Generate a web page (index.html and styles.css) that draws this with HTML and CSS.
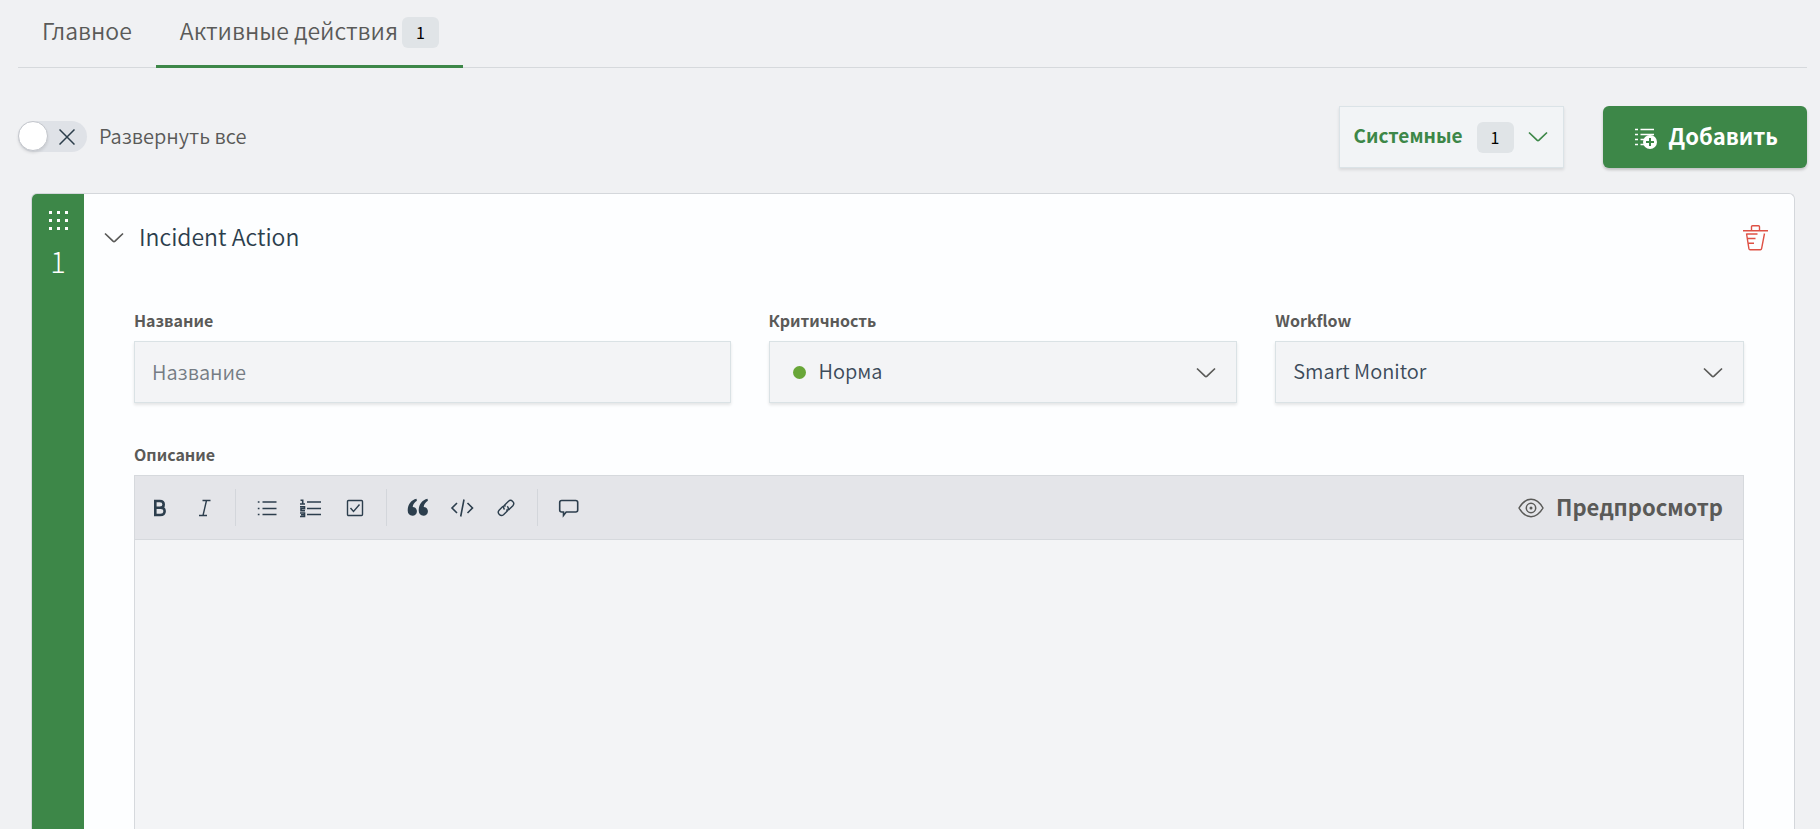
FILE: index.html
```html
<!DOCTYPE html>
<html lang="ru">
<head>
<meta charset="utf-8">
<meta name="viewport" content="width=device-width, initial-scale=1">
<title>Активные действия</title>
<link rel="stylesheet" href="styles.css">
</head>
<body>
<nav class="tabs" role="tablist">
  <button class="tab" type="button" role="tab" aria-selected="false"><span class="text">Главное</span></button>
  <button class="tab tab-active" type="button" role="tab" aria-selected="true"><span class="text">Активные действия</span> <span class="badge">1</span></button>
</nav>

<div class="controls">
  <label class="switch">
    <span class="switch-track">
      <input class="switch-input" type="checkbox">
      <svg class="switch-cross" width="16" height="16" viewBox="0 0 16 16" aria-hidden="true"><path d="M.5.5l15 15M15.5.5l-15 15"/></svg>
    </span>
    Развернуть все
  </label>
  <div class="controls-right">
    <button class="system-button" type="button">
      <span class="text">Системные</span> <span class="badge">1</span>
      <svg class="chevron" width="20" height="12" viewBox="0 0 20 12" aria-hidden="true"><path d="M1 1.5l8 7.6q1 .9 2 0l8-7.6"/></svg>
    </button>
    <button class="add-button" type="button">
      <svg width="22" height="24" viewBox="0 0 22 24" aria-hidden="true">
        <path class="add-lines" d="M0 4.500h3M5.500 4.500H19M0 9.500h3M5.500 9.500H19M0 14.500h3M5.500 14.500h4M0 19.500h3M5.500 19.500h4"/>
        <circle class="add-disc" cx="15" cy="17" r="7"/>
        <path class="add-plus" d="M15 13v8M11 17h8"/>
      </svg>
      <span class="text">Добавить</span>
    </button>
  </div>
</div>

<main class="card">
  <div class="card-rail">
    <svg width="19" height="19" viewBox="0 0 19 19" aria-hidden="true"><path d="M0 0h3v3H0zM8 0h3v3H8zM16 0h3v3h-3zM0 8h3v3H0zM8 8h3v3H8zM16 8h3v3h-3zM0 16h3v3H0zM8 16h3v3H8zM16 16h3v3h-3z"/></svg>
    <span>1</span>
  </div>
  <section class="card-body">
    <header class="card-header">
      <button class="card-toggle" type="button">
        <svg class="chevron" width="20" height="12" viewBox="0 0 20 12" aria-hidden="true"><path d="M1 1.5l8 7.600q1 .9 2 0l8-7.600"/></svg>
        <span class="text">Incident Action</span>
      </button>
      <button class="delete-button" type="button" aria-label="Удалить">
        <svg width="25" height="26" viewBox="0 0 25 26" aria-hidden="true"><path d="M0 5.800h25M8.500 5.500V1.800q0-1 1-1h6q1 0 1 1v3.700M3.500 8.500l2.400 15.200q.2 1 1.200 1h10.300q1 0 1.200-1L21.500 8.500M3.500 9h11M4.500 13.500h8M5 18.300h6"/></svg>
      </button>
    </header>
    <form class="form">
      <div class="fields">
        <div class="field">
          <label class="field-label" for="name">Название</label>
          <input class="control" id="name" type="text" placeholder="Название">
        </div>
        <div class="field">
          <label class="field-label" for="severity">Критичность</label>
          <div class="select-box">
            <span class="dot"></span>
            <select class="control control-dotted" id="severity"><option>Норма</option></select>
            <svg class="chevron select-chevron" width="20" height="12" viewBox="0 0 20 12" aria-hidden="true"><path d="M1 1.500l8 7.600q1 .9 2 0l8-7.600"/></svg>
          </div>
        </div>
        <div class="field">
          <label class="field-label" for="workflow">Workflow</label>
          <div class="select-box">
            <select class="control" id="workflow"><option>Smart Monitor</option></select>
            <svg class="chevron select-chevron" width="20" height="12" viewBox="0 0 20 12" aria-hidden="true"><path d="M1 1.500l8 7.600q1 .9 2 0l8-7.600"/></svg>
          </div>
        </div>
      </div>
      <label class="field-label" for="description">Описание</label>
      <div class="editor">
        <div class="toolbar">
          <button class="tool" type="button" aria-label="Полужирный">
            <svg width="24" height="24" viewBox="0 0 24 24" aria-hidden="true"><path class="thick" d="M7.300 5v14h4.900q4.400 0 4.400-3.800T12.200 11.700H7.300h4.500q3.900 0 3.900-3.300T11.800 5z"/></svg>
          </button>
          <button class="tool" type="button" aria-label="Курсив">
            <svg width="24" height="24" viewBox="0 0 24 24" aria-hidden="true"><path d="M10.500 4.500h8M7 19.500h8M14.500 4.500l-3.500 15"/></svg>
          </button>
          <span class="divider"></span>
          <button class="tool" type="button" aria-label="Маркированный список">
            <svg width="24" height="24" viewBox="0 0 24 24" aria-hidden="true"><path d="M7.500 6h14M7.500 12.500h14M7.500 18.500h14M2.800 6h1.700M2.800 12.500h1.700M2.800 18.500h1.700"/></svg>
          </button>
          <button class="tool" type="button" aria-label="Нумерованный список">
            <svg width="24" height="24" viewBox="0 0 24 24" aria-hidden="true"><path d="M8 6h14M8 12.500h14M8 18.500h14"/><path class="digits" d="M1.500 4.300h2.200v3.400M1 8h5M1 10.800h4.500v1.800H2v2.200h4M1 17h4.500v3.500H1M2 18.800h3.500"/></svg>
          </button>
          <button class="tool" type="button" aria-label="Список задач">
            <svg width="24" height="24" viewBox="0 0 24 24" aria-hidden="true"><rect x="4.500" y="4.500" width="15" height="15" rx="1"/><path d="M7.500 12l3 3.500 6-7"/></svg>
          </button>
          <span class="divider"></span>
          <button class="tool" type="button" aria-label="Цитата">
            <svg width="24" height="24" viewBox="0 0 24 24" aria-hidden="true"><path class="solid" d="M10.500 2.700C5 4 1.700 8.500 1.700 14.500c0 3.300 1.900 5.200 4.700 5.200 2.600 0 4.500-1.900 4.500-4.300 0-2.500-1.800-4.300-4.200-4.300.3-2.700 1.800-5 4.200-6.300zM21.500 2.700c-5.500 1.300-8.800 5.800-8.800 11.800 0 3.300 1.900 5.200 4.700 5.200 2.600 0 4.500-1.900 4.500-4.300 0-2.500-1.800-4.300-4.200-4.300.3-2.700 1.800-5 4.200-6.300z"/></svg>
          </button>
          <button class="tool" type="button" aria-label="Код">
            <svg width="24" height="24" viewBox="0 0 24 24" aria-hidden="true"><path class="medium" d="M7 7L2 12l5 5M17.500 7l5 5-5 5M14 3.500l-3.300 17"/></svg>
          </button>
          <button class="tool" type="button" aria-label="Ссылка">
            <svg width="24" height="24" viewBox="0 0 24 24" aria-hidden="true"><path d="M10.500 13.500q-2-2.300.2-4.600l3.800-3.700q2.100-1.800 4.200.2t.2 4.300l-3.400 3.400q-1.500 1.300-3.300.7M13.300 10.200q2.200 2.500 0 4.800l-3.800 3.700q-2.100 1.800-4.200-.2t-.2-4.300l3.400-3.400q1.500-1.300 3.300-.7"/></svg>
          </button>
          <span class="divider"></span>
          <button class="tool" type="button" aria-label="Комментарий">
            <svg width="24" height="24" viewBox="0 0 24 24" aria-hidden="true"><path class="medium" d="M4.700 4.500h14q2 0 2 2V14q0 2-2 2H9.200l-2.700 3.500V16H4.700q-2 0-2-2V6.500q0-2 2-2z"/></svg>
          </button>
          <button class="preview" type="button">
            <svg width="26" height="20" viewBox="0 0 26 20" aria-hidden="true"><path d="M1 10Q6 1.300 13 1.300T25 10Q20 18.700 13 18.700T1 10z"/><circle cx="13" cy="10" r="4.700"/><circle class="pupil" cx="13" cy="10" r="1.500"/></svg>
            <span class="text">Предпросмотр</span>
          </button>
        </div>
        <textarea class="editor-text" id="description"></textarea>
      </div>
    </form>
  </section>
</main>
</body>
</html>
```
FILE: styles.css
```css
*, *::before { box-sizing: border-box; }

body {
  margin: 0;
  height: 100vh;
  padding: 0 13px 0 18px;
  display: flex;
  flex-direction: column;
  overflow: hidden;
  background: #f0f1f3;
  color: #5a5a58;
  font-family: "Noto Sans CJK SC", "Noto Sans", sans-serif;
  font-size: 20px;
  font-weight: 350;
  line-height: 28px;
}

button, input, select, textarea { font: inherit; color: inherit; }
button { margin: 0; border: 0; background: none; cursor: pointer; }
svg { display: block; flex: none; fill: none; stroke: currentColor; }
.text { padding-bottom: 4px; }

.tabs {
  display: flex;
  flex: none;
  height: 68px;
  box-shadow: inset 0 -1px #d6d9dc;
}
.tab {
  display: flex;
  align-items: center;
  gap: 4px;
  padding: 0 24px 1px;
  border-bottom: 3px solid transparent;
  font-size: 23px;
}
.tab-active { border-color: #3d8748; }
.badge {
  width: 37px;
  height: 31px;
  border-radius: 6px;
  background: #e0e4e7;
  color: #000;
  font-size: 16px;
  font-weight: 400;
  line-height: 31px;
  text-align: center;
}

.controls {
  display: flex;
  flex: none;
  align-items: center;
  justify-content: space-between;
  margin-top: 38px;
}
.switch { display: flex; align-items: center; gap: 12px; padding-bottom: 2px; }
.switch-track { position: relative; }
.switch-input {
  display: block;
  appearance: none;
  width: 69px;
  height: 31px;
  margin: 0;
  border-radius: 16px;
  background: #dfe2e7;
}
.switch-input::before {
  content: "";
  display: block;
  width: 30px;
  height: 30px;
  border: 1px solid #c3c6cc;
  border-radius: 50%;
  background: #fff;
  box-shadow: 0 2px 3px #0000001a;
}
.switch-cross {
  position: absolute;
  top: 8px;
  right: 12px;
  color: #2c3e4b;
  stroke-width: 1.5;
  pointer-events: none;
}
.controls-right { display: flex; gap: 39px; }
.system-button {
  display: flex;
  align-items: center;
  gap: 14px;
  padding: 0 15px 0 14px;
  border: 1px solid #dbe3e7;
  background: #f2f4f6;
  box-shadow: 0 2px 3px #0000001a;
  color: #3d8748;
  font-size: 19px;
  font-weight: 700;
}
.add-button {
  display: flex;
  align-items: center;
  gap: 12px;
  height: 62px;
  padding: 0 29px 0 32px;
  border-radius: 6px;
  background: #3d8748;
  box-shadow: 0 2px 3px #00000033;
  color: #fff;
  font-size: 22px;
  font-weight: 700;
}
.add-lines { stroke-width: 1.7; }
.add-disc { fill: #fff; stroke: none; }
.add-plus { stroke: #3d8748; stroke-width: 2; }
.chevron { stroke-width: 1.7; }

.card {
  display: flex;
  flex: 1;
  min-height: 0;
  margin: 25px 12px 0 13px;
  border: 1px solid #d4d7db;
  border-bottom: 0;
  border-radius: 6px 6px 0 0;
  background: #fdfeff;
  overflow: hidden;
}
.card-rail {
  display: flex;
  flex: none;
  flex-direction: column;
  align-items: center;
  gap: 12px;
  width: 52px;
  padding-top: 17px;
  background: #3d8748;
  color: #fff;
  font-size: 29px;
  font-weight: 300;
  line-height: 36px;
}
.card-rail svg { fill: #fff; stroke: none; }
.card-body { display: flex; flex: 1; flex-direction: column; min-width: 0; }
.card-header {
  display: flex;
  align-items: center;
  justify-content: space-between;
  padding: 27px 26px 0 20px;
}
.card-toggle {
  display: flex;
  align-items: center;
  gap: 15px;
  padding: 0;
  color: #2c3e4d;
  font-size: 23px;
  line-height: 30px;
}
.card-toggle svg { color: #5a5a58; }
.delete-button { padding: 0; color: #de5145; }
.delete-button svg { stroke-width: 1.4; }

.form {
  display: flex;
  flex: 1;
  flex-direction: column;
  min-height: 0;
  padding: 52px 50px 0 50px;
}
.fields {
  display: grid;
  grid-template-columns: 14fr 11fr 11fr;
  gap: 38px;
  margin-bottom: 38px;
}
.field { min-width: 0; }
.field-label {
  display: block;
  margin-bottom: 8px;
  font-size: 16px;
  font-weight: 700;
  line-height: 26px;
}
.control {
  display: block;
  appearance: none;
  width: 100%;
  height: 62px;
  padding: 0 17px 2px;
  border: 1px solid #dae2e5;
  border-radius: 0;
  background: #f3f4f6;
  box-shadow: 0 2px 3px #0000001a;
  color: #3c4b5a;
}
.control::placeholder { color: #757c84; opacity: 1; }
.control-dotted { padding-left: 49px; }
.select-box { position: relative; }
.dot {
  position: absolute;
  top: 25px;
  left: 24px;
  width: 13px;
  height: 13px;
  border-radius: 50%;
  background: #68a638;
}
.select-chevron {
  position: absolute;
  top: 26px;
  right: 21px;
  pointer-events: none;
}

.editor {
  display: flex;
  flex: 1;
  flex-direction: column;
  border: 1px solid #d6d9dd;
  border-bottom: 0;
  background: #f3f4f6;
}
.toolbar {
  display: flex;
  flex: none;
  align-items: center;
  height: 64px;
  padding: 0 20px 0 3px;
  border-bottom: 1px solid #d6d9dd;
  background: #e4e5e9;
}
.tool { width: 44px; height: 44px; padding: 10px; color: #2c3e4d; }
.tool svg { stroke-width: 1.4; }
.tool .thick { stroke-width: 2.6; }
.tool .medium { stroke-width: 1.6; }
.tool .digits { stroke-width: 1.6; }
.tool .solid { fill: currentColor; stroke: none; }
.divider { width: 1px; height: 37px; margin: 0 9px; background: #d3d6db; }
.preview {
  display: flex;
  align-items: center;
  gap: 12px;
  margin-left: auto;
  padding: 0;
  font-size: 22px;
  font-weight: 700;
}
.preview svg { stroke-width: 1.5; }
.preview .pupil { fill: currentColor; stroke: none; }
.editor-text {
  flex: 1;
  min-height: 0;
  padding: 16px 18px;
  border: 0;
  background: transparent;
  resize: none;
}
```
